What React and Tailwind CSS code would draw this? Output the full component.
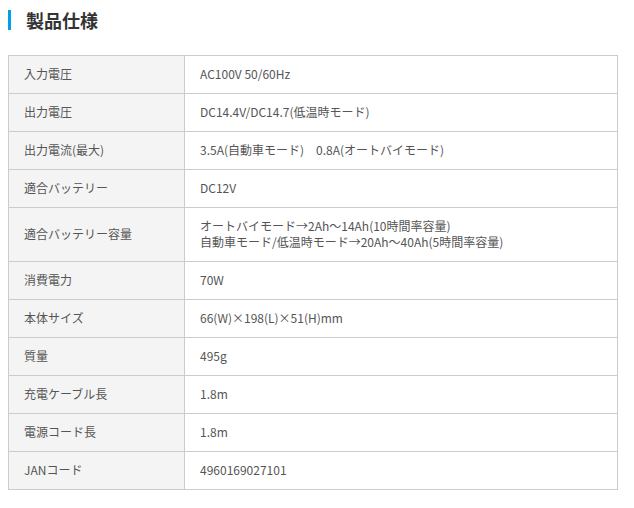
const specs = [
  { label: '入力電圧', value: ['AC100V 50/60Hz'] },
  { label: '出力電圧', value: ['DC14.4V/DC14.7(低温時モード)'] },
  { label: '出力電流(最大)', value: ['3.5A(自動車モード)　0.8A(オートバイモード)'] },
  { label: '適合バッテリー', value: ['DC12V'] },
  {
    label: '適合バッテリー容量',
    value: ['オートバイモード→2Ah～14Ah(10時間率容量)', '自動車モード/低温時モード→20Ah～40Ah(5時間率容量)'],
  },
  { label: '消費電力', value: ['70W'] },
  { label: '本体サイズ', value: ['66(W)×198(L)×51(H)mm'] },
  { label: '質量', value: ['495g'] },
  { label: '充電ケーブル長', value: ['1.8m'] },
  { label: '電源コード長', value: ['1.8m'] },
  { label: 'JANコード', value: ['4960169027101'] },
];

export default function App() {
  return (
    <div
      className="bg-white w-[634px] h-[508px] pt-[10px] px-[8px]"
      style={{ fontFamily: '"Noto Sans CJK JP", "Noto Sans", sans-serif' }}
    >
      {/* heading */}
      <div className="flex items-center h-[20px]">
        <div className="w-[3px] h-[20px] bg-[#00a0e9]"></div>
        <h2 className="ml-[15px] text-[18px] leading-[20px] font-bold text-[#333]">製品仕様</h2>
      </div>

      <table className="mt-[25px] w-[610px] border-collapse text-[12px] leading-[16px] text-[#555]">
        <tbody>
          {specs.map((row) => (
            <tr key={row.label}>
              <td className="w-[176px] bg-[#f4f4f4] border border-[#ccc] pl-[15px] pt-[10px] pb-[11px] align-middle">
                {row.label}
              </td>
              <td className="border border-[#ccc] pl-[15px] pt-[10px] pb-[11px] align-middle">
                {row.value.map((line) => (
                  <div key={line}>{line}</div>
                ))}
              </td>
            </tr>
          ))}
        </tbody>
      </table>
    </div>
  );
}
